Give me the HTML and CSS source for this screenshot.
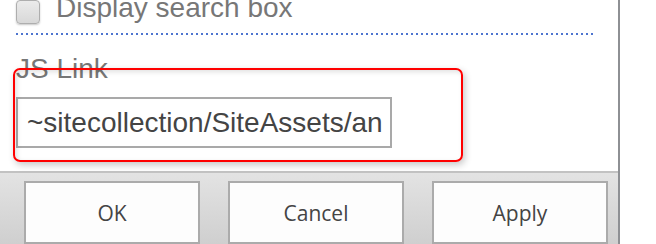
FILE: index.html
```html
<!DOCTYPE html>
<html>
<head>
<meta charset="utf-8">
<link rel="stylesheet" href="styles.css">
</head>
<body>
<div class="page">
  <div class="panel">
    <div class="content">
      <label class="check-row">
        <input type="checkbox" class="cb">
        <span class="check-text">Display search box</span>
      </label>
      <div class="sep"></div>
      <div class="field-label">JS Link</div>
      <input class="field" type="text" value="~sitecollection/SiteAssets/an">
    </div>
    <div class="footer">
      <button class="btn">OK</button>
      <button class="btn">Cancel</button>
      <button class="btn">Apply</button>
    </div>
  </div>
  <div class="highlight"></div>
</div>
</body>
</html>
```
FILE: styles.css
```css
html, body {
  margin: 0;
  padding: 0;
  background: #ffffff;
}
.page {
  position: relative;
  width: 656px;
  height: 244px;
  overflow: hidden;
}
.panel {
  width: 620px;
  height: 244px;
  box-sizing: border-box;
  border-right: 2px solid #8e9094;
  display: flex;
  flex-direction: column;
}
.content {
  padding-left: 16px;
  font-family: "Liberation Sans", Arial, sans-serif;
}
.check-row {
  display: flex;
  align-items: flex-start;
  gap: 16px;
  height: 24px;
}
.cb {
  appearance: none;
  -webkit-appearance: none;
  margin: 0;
  width: 24px;
  height: 24px;
  box-sizing: border-box;
  border: 1px solid #aeaeae;
  border-radius: 4px;
  background: linear-gradient(#ebebeb, #d8d8d8);
  box-shadow: 0 1px 2px rgba(0, 0, 0, 0.22);
}
.check-text {
  font-size: 28px;
  line-height: 28px;
  margin-top: -6px;
  color: #777777;
}
.sep {
  margin-top: 9px;
  width: 579px;
  height: 2px;
  background: repeating-linear-gradient(to right, #4d74cf 0 2px, transparent 2px 5px);
}
.field-label {
  margin-top: 20px;
  font-size: 28px;
  line-height: 28px;
  color: #777777;
}
.field {
  display: block;
  margin: 14px 0 0 0;
  width: 376px;
  height: 51px;
  box-sizing: border-box;
  border: 2px solid #a9a9a9;
  padding: 0 4px 0 9px;
  font-family: "Liberation Sans", Arial, sans-serif;
  font-size: 28px;
  color: #444444;
  background: #ffffff;
  outline: none;
}
.footer {
  margin-top: 23px;
  flex: 1;
  border-top: 2px solid #c2c2c2;
  background: linear-gradient(#e3e3e3, #cfcfcf);
  display: flex;
  gap: 28px;
  padding: 8px 0 0 24px;
}
.btn {
  width: 176px;
  height: 63px;
  box-sizing: border-box;
  border: 2px solid #ababab;
  background: #fdfdfd;
  font-family: "Open Sans", "Noto Sans", sans-serif;
  font-size: 21px;
  color: #444444;
  padding: 0;
  margin: 0;
  border-radius: 0;
}
.highlight {
  position: absolute;
  left: 13px;
  top: 68px;
  width: 450px;
  height: 94px;
  box-sizing: border-box;
  border: 2px solid #ff0000;
  border-radius: 7px;
  box-shadow: 2px 3px 7px rgba(0, 0, 0, 0.22), inset 2px 2px 5px rgba(0, 0, 0, 0.12);
  pointer-events: none;
}
```
